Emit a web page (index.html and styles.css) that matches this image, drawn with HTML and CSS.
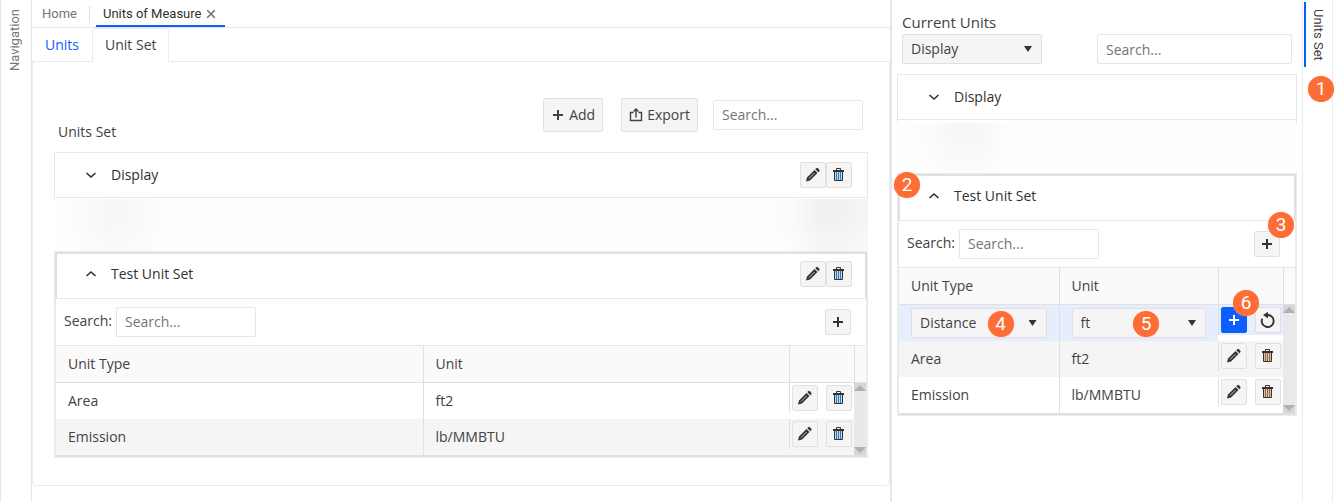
FILE: index.html
```html
<!DOCTYPE html>
<html lang="en">
<head>
  <meta charset="UTF-8">
  <meta name="viewport" content="width=device-width, initial-scale=1.0">
  <title>Units of Measure</title>
  <link rel="stylesheet" href="styles.css">
</head>
<body>

  <!-- icons used on the page -->
  <svg class="icon-defs" width="0" height="0">
    <symbol id="i-down" viewBox="0 0 16 16"><path d="M3.500 6l4.500 4 4.500-4" fill="none" stroke="currentColor" stroke-width="1.600"/></symbol>
    <symbol id="i-up" viewBox="0 0 16 16"><path d="M3.500 10l4.500-4 4.500 4" fill="none" stroke="currentColor" stroke-width="1.600"/></symbol>
    <symbol id="i-plus" viewBox="0 0 16 16"><path d="M7 3h2v4h4v2H9v4H7V9H3V7h4z" fill="currentColor"/></symbol>
    <symbol id="i-export" viewBox="0 0 16 16"><path d="M5.500 5.500h-3v8h11v-8h-3M8 10.500V2.500M5.500 4.500L8 2l2.500 2.500" fill="none" stroke="currentColor" stroke-width="1.400"/></symbol>
    <symbol id="i-edit" viewBox="0 0 16 16"><path d="M1 14.500l1-4 7.500-7.500 3 3-7.500 7.500z" fill="currentColor"/><path d="M4 11.500l5.500-5.500" stroke="#c4c4c4" stroke-width="1"/><path d="M10.300 2.200l1-1a1.100 1.100 0 0 1 1.500 0l1.500 1.500a1.100 1.100 0 0 1 0 1.500l-1 1z" fill="currentColor"/></symbol>
    <symbol id="i-trash" viewBox="0 0 16 16"><path d="M3 4h9v9H3z" class="bin"/><path d="M5.500 5v8M7.500 5v8M9.500 5v8" class="bin-lines"/><path d="M5.500 3V1.500h4V3M3.500 4v9.500h8V4" fill="none" stroke="currentColor" stroke-width="1"/><path d="M2 3h11v2H2z" fill="currentColor"/></symbol>
    <symbol id="i-undo" viewBox="0 0 16 16"><path d="M7.500 3a6 6 0 1 1-5.300 3.600" fill="none" stroke="currentColor" stroke-width="1.900"/><path d="M3 3l5-3.200v6.600z" fill="currentColor"/></symbol>
    <symbol id="i-close" viewBox="0 0 16 16"><path d="M2 2l12 12M14 2L2 14" fill="none" stroke="currentColor" stroke-width="2.800"/></symbol>
  </svg>

  <div class="app">
    <nav class="rail rail-left">
      <button type="button" class="rail-tab">Navigation</button>
    </nav>

    <main class="main">
      <div class="doc-tabs">
        <button type="button" class="doc-tab">Home</button>
        <span class="doc-sep"></span>
        <button type="button" class="doc-tab active">Units of Measure <svg class="close"><use href="#i-close"/></svg></button>
      </div>

      <div class="tabs">
        <button type="button" class="tab link">Units</button>
        <button type="button" class="tab active">Unit Set</button>
      </div>

      <section class="panel">
        <div class="toolbar">
          <h2 class="title">Units Set</h2>
          <button type="button" class="btn btn-add"><svg class="icon"><use href="#i-plus"/></svg>Add</button>
          <button type="button" class="btn btn-export"><svg class="icon"><use href="#i-export"/></svg>Export</button>
          <input type="text" class="text-box search-main" placeholder="Search..." aria-label="Search unit sets">
        </div>

        <div class="card">
          <button type="button" class="toggle"><svg class="icon"><use href="#i-down"/></svg>Display</button>
          <button type="button" class="icon-btn" aria-label="Edit"><svg class="icon"><use href="#i-edit"/></svg></button>
          <button type="button" class="icon-btn" aria-label="Delete"><svg class="icon"><use href="#i-trash"/></svg></button>
        </div>
        <div class="faded faded-main"></div>

        <div class="unit-set">
          <div class="set-head">
            <button type="button" class="toggle"><svg class="icon"><use href="#i-up"/></svg>Test Unit Set</button>
            <button type="button" class="icon-btn" aria-label="Edit"><svg class="icon"><use href="#i-edit"/></svg></button>
            <button type="button" class="icon-btn" aria-label="Delete"><svg class="icon"><use href="#i-trash"/></svg></button>
          </div>
          <div class="set-body">
            <div class="search-row">
              <label for="search-set">Search:</label>
              <input type="text" id="search-set" class="text-box" placeholder="Search...">
              <button type="button" class="icon-btn" aria-label="Add unit"><svg class="icon"><use href="#i-plus"/></svg></button>
            </div>
            <table class="grid">
              <colgroup><col><col><col class="col-actions"><col class="col-scroll"></colgroup>
              <thead>
                <tr><th>Unit Type</th><th>Unit</th><th></th><th></th></tr>
              </thead>
              <tbody>
                <tr>
                  <td>Area</td>
                  <td>ft2</td>
                  <td class="cell-actions">
                    <div class="actions">
                      <button type="button" class="icon-btn" aria-label="Edit Area"><svg class="icon"><use href="#i-edit"/></svg></button>
                      <button type="button" class="icon-btn" aria-label="Delete Area"><svg class="icon"><use href="#i-trash"/></svg></button>
                    </div>
                  </td>
                  <td class="scroll" rowspan="2"><span class="arrow arrow-up"></span><span class="arrow arrow-down"></span></td>
                </tr>
                <tr class="alt">
                  <td>Emission</td>
                  <td>lb/MMBTU</td>
                  <td class="cell-actions">
                    <div class="actions">
                      <button type="button" class="icon-btn" aria-label="Edit Emission"><svg class="icon"><use href="#i-edit"/></svg></button>
                      <button type="button" class="icon-btn" aria-label="Delete Emission"><svg class="icon"><use href="#i-trash"/></svg></button>
                    </div>
                  </td>
                </tr>
              </tbody>
            </table>
          </div>
        </div>
      </section>
    </main>

    <aside class="side">
      <div class="side-top">
        <label for="current-units" class="side-label">Current Units</label>
        <div class="side-filters">
          <div class="drop">
            <select id="current-units" class="select"><option>Display</option></select>
          </div>
          <input type="text" class="text-box" placeholder="Search..." aria-label="Search current units">
        </div>
      </div>

      <div class="card">
        <button type="button" class="toggle"><svg class="icon"><use href="#i-down"/></svg>Display</button>
      </div>
      <div class="faded faded-side"></div>

      <div class="unit-set">
        <span class="badge badge-2">2</span>
        <div class="set-head">
          <button type="button" class="toggle"><svg class="icon"><use href="#i-up"/></svg>Test Unit Set</button>
        </div>
        <div class="set-body">
          <div class="search-row">
            <label for="search-side">Search:</label>
            <input type="text" id="search-side" class="text-box" placeholder="Search...">
            <span class="marked">
              <button type="button" class="icon-btn" aria-label="Add unit"><svg class="icon"><use href="#i-plus"/></svg></button>
              <span class="badge badge-3">3</span>
            </span>
          </div>
          <table class="grid">
            <colgroup><col><col><col class="col-actions"><col class="col-scroll"></colgroup>
            <thead>
              <tr><th>Unit Type</th><th>Unit</th><th></th><th></th></tr>
            </thead>
            <tbody>
              <tr class="editing">
                <td>
                  <div class="drop">
                    <select class="select" aria-label="Unit Type"><option>Distance</option></select>
                    <span class="badge badge-4">4</span>
                  </div>
                </td>
                <td>
                  <div class="drop">
                    <select class="select" aria-label="Unit"><option>ft</option></select>
                    <span class="badge badge-5">5</span>
                  </div>
                </td>
                <td class="cell-actions">
                  <div class="actions">
                    <span class="marked">
                      <button type="button" class="icon-btn primary" aria-label="Save"><svg class="icon"><use href="#i-plus"/></svg></button>
                      <span class="badge badge-6">6</span>
                    </span>
                    <button type="button" class="icon-btn" aria-label="Cancel"><svg class="icon"><use href="#i-undo"/></svg></button>
                  </div>
                </td>
                <td class="scroll" rowspan="3"><span class="arrow arrow-up"></span><span class="arrow arrow-down"></span></td>
              </tr>
              <tr class="alt">
                <td>Area</td>
                <td>ft2</td>
                <td class="cell-actions">
                  <div class="actions">
                    <button type="button" class="icon-btn" aria-label="Edit Area"><svg class="icon"><use href="#i-edit"/></svg></button>
                    <button type="button" class="icon-btn" aria-label="Delete Area"><svg class="icon icon-warm"><use href="#i-trash"/></svg></button>
                  </div>
                </td>
              </tr>
              <tr>
                <td>Emission</td>
                <td>lb/MMBTU</td>
                <td class="cell-actions">
                  <div class="actions">
                    <button type="button" class="icon-btn" aria-label="Edit Emission"><svg class="icon"><use href="#i-edit"/></svg></button>
                    <button type="button" class="icon-btn" aria-label="Delete Emission"><svg class="icon icon-warm"><use href="#i-trash"/></svg></button>
                  </div>
                </td>
              </tr>
            </tbody>
          </table>
        </div>
      </div>
    </aside>

    <nav class="rail rail-right">
      <button type="button" class="rail-tab active">Units Set</button>
      <span class="badge badge-1">1</span>
    </nav>
  </div>

</body>
</html>
```

FILE: styles.css
```css
/* Global Styles */
* {
    box-sizing: border-box;
}

body {
    margin: 0;
    font-family: "Open Sans", "Noto Sans", sans-serif;
    font-size: 14px;
    line-height: 20px;
    color: #424242;
    background-color: #ffffff;
}

button, input, select {
    margin: 0;
    font: inherit;
    color: inherit;
}

button {
    padding: 0;
    border: none;
    background: none;
    cursor: pointer;
}

.icon-defs {
    position: absolute;
}

.icon {
    flex: none;
    width: 16px;
    height: 16px;
    --bin: #b5dcf5;
    --bin-lines: #3f74b5;
}

.icon-warm {
    --bin: #f5bd85;
    --bin-lines: #77726f;
}

.bin {
    fill: var(--bin);
}

.bin-lines {
    stroke: var(--bin-lines);
    stroke-width: 1px;
}

.app {
    display: flex;
    min-height: 100vh;
}

/* Side rails */
.rail {
    flex: none;
    font-family: Roboto, sans-serif;
    font-size: 13px;
    line-height: 16px;
}

.rail-left {
    width: 32px;
    padding: 9px 6px;
    border-left: 1px solid #e6e6e6;
    border-right: 1px solid #e6e6e6;
    color: #757575;
}

.rail-tab {
    writing-mode: vertical-rl;
}

.rail-left .rail-tab {
    transform: rotate(180deg);
}

.rail-right {
    position: relative;
    width: 31px;
    margin-right: 1px;
    padding: 2px 0 0 1px;
    border-left: 1px solid #ebebeb;
    border-right: 1px solid #ebebeb;
}

.rail-right .rail-tab {
    padding: 7px 0 6px;
    border-left: 2px solid #0d5eff;
    line-height: 24px;
}

/* Main column */
.main {
    flex: 1;
    min-width: 0;
}

.doc-tabs {
    display: flex;
    height: 28px;
    border-bottom: 1px solid #e6e6e6;
    font-family: Roboto, sans-serif;
    font-size: 13px;
}

.doc-tab {
    display: flex;
    align-items: center;
    padding: 0 12px 0 10px;
    color: #757575;
}

.doc-tab.active {
    gap: 5px;
    padding: 0 9px 0 7px;
    border-top: 2px solid transparent;
    border-bottom: 2px solid #0d5eff;
    color: #303030;
}

.close {
    width: 10px;
    height: 10px;
    color: #757575;
}

.doc-sep {
    width: 1px;
    margin: 6px 6px 4px 0;
    background-color: #dedede;
}

.tabs {
    display: flex;
    height: 33px;
}

.tab {
    padding: 0 12px 1px;
    border: 1px solid transparent;
    border-bottom: none;
}

.tab.link {
    color: #0d5eff;
}

.tab.active {
    margin-bottom: -1px;
    border-color: #ebebeb;
    border-radius: 4px 4px 0 0;
    background-color: #ffffff;
}

.panel {
    padding: 36px 21px 27px;
    border: 1px solid #ebebeb;
    border-radius: 0 0 4px 4px;
}

.toolbar {
    display: flex;
    align-items: flex-start;
    height: 54px;
    padding: 0 5px 0 4px;
}

.title {
    margin: 24px auto 0 0;
    font-size: 14px;
    font-weight: normal;
}

.btn {
    display: flex;
    align-items: center;
    height: 34px;
    margin-right: 18px;
    padding: 0 7px 0 6px;
    gap: 3px;
    border: 1px solid #e0e0e0;
    border-radius: 2px;
    background-color: #f5f5f5;
}

.btn-export {
    margin-right: 15px;
}

.text-box {
    width: 140px;
    height: 30px;
    padding: 0 8px;
    border: 1px solid #e6e6e6;
    border-radius: 2px;
    background-color: #ffffff;
}

.text-box::placeholder {
    color: #757575;
}

.search-main {
    width: 150px;
    margin-top: 2px;
    padding-bottom: 2px;
}

/* Unit set cards */
.card, .set-head {
    display: flex;
    align-items: center;
}

.card {
    height: 46px;
    padding: 0 15px 0 28px;
    border: 1px solid #e8e8e8;
}

.set-head {
    height: 47px;
    padding: 0 13px 4px 26px;
    border: 2px solid #e0e0e0;
    border-bottom: 1px solid #e8e8e8;
}

.toggle {
    display: flex;
    flex: 1;
    align-items: center;
    gap: 12px;
    color: #303030;
}

.unit-set {
    position: relative;
    border: 1px solid #ebebeb;
}

.set-body {
    border: 1px solid #ebebeb;
    border-top: none;
    border-bottom: 2px solid #e0e0e0;
}

.icon-btn {
    display: flex;
    flex: none;
    align-items: center;
    justify-content: center;
    width: 26px;
    height: 26px;
    border: 1px solid #e0e0e0;
    border-radius: 2px;
    background-color: #f5f5f5;
    color: #333333;
}

.icon-btn.primary {
    border-color: #0d5eff;
    background-color: #0d5eff;
    color: #ffffff;
}

.search-row {
    display: flex;
    align-items: center;
    height: 46px;
    padding: 0 15px 0 8px;
    gap: 4px;
}

.search-row label, .search-row .text-box {
    padding-bottom: 2px;
}

.search-row > :last-child {
    margin-left: auto;
}

/* Collapsed stretch between the sets */
.faded {
    height: 53px;
}

.faded::before {
    content: "";
    display: block;
    height: 1px;
    border: 1px solid #e8e8e8;
    border-width: 0 1px;
    background-color: #ffffff;
}

.faded-side::before {
    height: 3px;
}

.faded-main {
    background: linear-gradient(rgba(255, 255, 255, 0) 40%, rgba(255, 255, 255, 0.4)), linear-gradient(90deg, #fdfdfd 0, #fcfcfc 22px, #f7f7f7 55px, #f8f8f8 75px, #fdfdfd 110px, #fefefe 150px, #fefefe calc(100% - 110px), #fbfbfb calc(100% - 76px), #f1f1f1 calc(100% - 48px), #f1f1f1 calc(100% - 28px), #f5f5f5 100%);
}

.faded-side {
    background: linear-gradient(rgba(255, 255, 255, 0) 30%, rgba(255, 255, 255, 0.6)), linear-gradient(90deg, #fefefe 0, #fcfcfc 30px, #f7f7f7 55px, #f7f7f7 82px, #fdfdfd 110px, #fefefe 150px);
}

/* Unit table */
.grid {
    width: 100%;
    table-layout: fixed;
    border-collapse: separate;
    border-spacing: 0;
}

.col-actions {
    width: 65px;
}

.col-scroll {
    width: 12px;
}

.grid th {
    height: 38px;
    padding: 0 12px;
    border-top: 1px solid #e6e6e6;
    border-bottom: 1px solid #e0e0e0;
    background-color: #fafafa;
    font-weight: normal;
    text-align: left;
}

.grid th + th {
    border-left: 1px solid #e0e0e0;
}

.grid td {
    height: 36px;
    padding: 0 12px;
}

.grid td + td {
    border-left: 1px solid #e0e0e0;
}

.alt td {
    background-color: #f5f5f5;
}

.grid .cell-actions {
    padding: 0;
    border-left: none;
    vertical-align: top;
}

.actions {
    display: flex;
    height: 30px;
    padding: 2px;
    gap: 8px;
    border-left: 1px solid #e0e0e0;
}

.editing td {
    background-color: #e6edfd;
}

.editing .cell-actions {
    background-color: #ffffff;
}

.editing .actions {
    background-color: #e6edfd;
}

.grid .scroll {
    position: relative;
    padding: 0;
    border-left: none;
    background-color: #e9e9e9;
}

.grid .scroll .arrow {
    position: absolute;
    left: 0;
    width: 12px;
    height: 8px;
    background-color: #d6d6d6;
}

.arrow::before {
    content: "";
    display: block;
    height: 6px;
    background-color: #b0b0b0;
    clip-path: polygon(50% 0, 100% 100%, 0 100%);
}

.arrow-up {
    top: 0;
    padding-top: 2px;
}

.arrow-down {
    bottom: 0;
}

.arrow-down::before {
    clip-path: polygon(0 0, 100% 0, 50% 100%);
}

/* Current units */
.side {
    width: 412px;
    padding: 0 5px;
    border-left: 2px solid #e6e6e6;
}

.side-top {
    padding: 12px 5px 10px;
}

.side-label {
    display: block;
    padding-bottom: 2px;
    font-size: 15px;
}

.side-filters {
    display: flex;
    justify-content: space-between;
}

.side-filters .drop {
    width: 140px;
}

.side-filters .text-box {
    width: 195px;
}

.drop {
    position: relative;
}

.drop::after {
    content: "";
    position: absolute;
    top: 12px;
    right: 10px;
    width: 8px;
    height: 6px;
    background-color: #333333;
    clip-path: polygon(0 0, 100% 0, 50% 100%);
    pointer-events: none;
}

.select {
    display: block;
    width: 100%;
    height: 30px;
    padding: 0 8px;
    border: 1px solid #e0e0e0;
    border-radius: 2px;
    background-color: #f5f5f5;
    appearance: none;
}

/* Numbered markers */
.marked {
    position: relative;
}

.badge {
    position: absolute;
    z-index: 1;
    width: 26px;
    height: 26px;
    border-radius: 50%;
    background-color: #ff6d36;
    box-shadow: 0 0 1px #ffb496;
    font-family: Roboto, sans-serif;
    font-size: 19px;
    line-height: 26px;
    text-align: center;
    color: #ffffff;
}

.badge-1 {
    top: 76px;
    right: -2px;
}

.badge-2 {
    top: -2px;
    left: -4px;
}

.badge-3 {
    top: -19px;
    right: -14px;
}

.badge-4 {
    top: 3px;
    right: 33px;
}

.badge-5 {
    top: 3px;
    right: 47px;
}

.badge-6 {
    top: -17px;
    right: -12px;
}
```
